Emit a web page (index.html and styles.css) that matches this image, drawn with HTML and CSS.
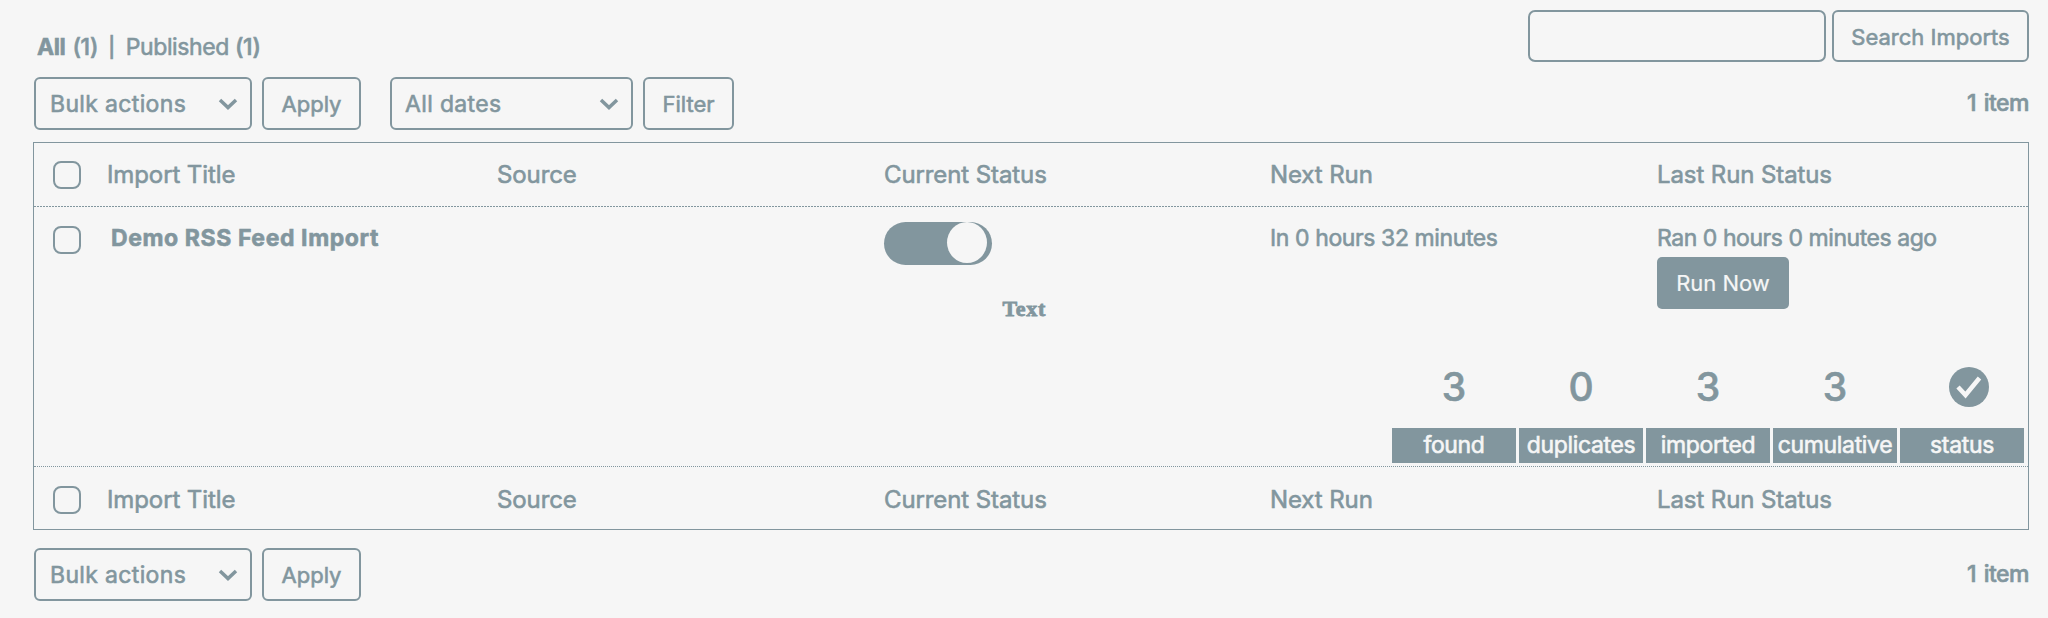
FILE: index.html
```html
<!DOCTYPE html>
<html lang="en">
<head>
<meta charset="utf-8">
<title>Imports</title>
<link rel="stylesheet" href="styles.css">
</head>
<body>
<header class="top">
  <nav class="views"><a class="views-all"><b>All</b><span class="count">(1)</span></a><span class="views-bar">|</span><a class="views-pub">Published <span class="count">(1)</span></a></nav>
  <form class="search"><input class="search-input" type="text" aria-label="Search"><button class="btn btn-search" type="button">Search Imports</button></form>
</header>
<section class="tablenav">
  <div class="select select-bulk"><span>Bulk actions</span><svg class="chevron" viewBox="0 0 20 12"><path d="M2 2l8 7.500L18 2"/></svg></div>
  <button class="btn btn-apply" type="button">Apply</button>
  <div class="select select-dates"><span>All dates</span><svg class="chevron" viewBox="0 0 20 12"><path d="M2 2l8 7.500L18 2"/></svg></div>
  <button class="btn btn-filter" type="button">Filter</button>
  <span class="items">1 item</span>
</section>
<main class="table">
  <div class="row head">
    <i class="check"></i><span>Import Title</span><span>Source</span><span>Current Status</span><span>Next Run</span><span>Last Run Status</span>
  </div>
  <div class="entry">
    <div class="row body">
      <i class="check"></i>
      <b class="name">Demo RSS Feed Import</b>
      <span></span>
      <div class="status"><div class="toggle"><i class="knob"></i></div><span class="note">Text</span></div>
      <span class="next">In 0 hours 32 minutes</span>
      <div class="last"><span class="ran">Ran 0 hours 0 minutes ago</span><button class="run-now" type="button">Run Now</button></div>
    </div>
    <div class="stats">
      <div class="stat"><span class="num">3</span><span class="label">found</span></div>
      <div class="stat"><span class="num">0</span><span class="label">duplicates</span></div>
      <div class="stat"><span class="num">3</span><span class="label">imported</span></div>
      <div class="stat"><span class="num">3</span><span class="label">cumulative</span></div>
      <div class="stat"><span class="num num-icon"><svg class="ok" viewBox="0 0 40 40"><circle cx="20" cy="20" r="20"/><path d="M9 20l7.500 8L30.500 11"/></svg></span><span class="label">status</span></div>
    </div>
  </div>
  <div class="row foot">
    <i class="check"></i><span>Import Title</span><span>Source</span><span>Current Status</span><span>Next Run</span><span>Last Run Status</span>
  </div>
</main>
<section class="tablenav tablenav-bottom">
  <div class="select select-bulk"><span>Bulk actions</span><svg class="chevron" viewBox="0 0 20 12"><path d="M2 2l8 7.500L18 2"/></svg></div>
  <button class="btn btn-apply" type="button">Apply</button>
  <span class="items">1 item</span>
</section>
</body>
</html>
```
FILE: styles.css
```css
* { box-sizing: border-box; }
body { margin: 0; height: 618px; overflow: hidden; padding: 10px 19px 0 33px; background: #f6f6f6; color: #82969e; font: 400 23px/28px Inter, "Liberation Sans", sans-serif; white-space: nowrap; -webkit-text-stroke: 0.6px; }
button, input { font: inherit; color: inherit; background: none; margin: 0; padding: 0; }
.top { display: flex; justify-content: space-between; height: 67px; }
.views { display: flex; padding: 23px 0 0 4px; letter-spacing: -0.4px; }
.views-all { display: flex; gap: 7px; }
.count { font-weight: 500; letter-spacing: -0.3px; }
.views-bar { margin: 0 11px 0 10px; font-size: 20px; font-weight: 500; }
.search { display: flex; gap: 6px; height: 52px; }
.search-input { width: 298px; border: 2px solid; border-radius: 7px; }
.btn { border: 2px solid; border-radius: 6px; height: 53px; font-size: 22px; text-align: center; }
.btn-search { width: 197px; height: 52px; padding-top: 1px; }
.tablenav { display: flex; height: 65px; padding-left: 1px; }
.tablenav-bottom { height: auto; padding-top: 18px; }
.select { display: flex; align-items: center; justify-content: space-between; height: 53px; border: 2px solid; border-radius: 6px; padding: 0 12px 0 14px; letter-spacing: 0.35px; }
.select-bulk { width: 218px; margin-right: 10px; }
.select-dates { width: 243px; margin: 0 10px 0 29px; padding-left: 13px; }
.btn-apply { width: 99px; }
.btn-filter { width: 91px; }
.chevron { width: 20px; height: 12px; fill: none; stroke: currentColor; stroke-width: 3.5; }
.items { margin-left: auto; padding-top: 12px; font-weight: 500; letter-spacing: -0.5px; word-spacing: 2px; }
.table { border: 1px solid; height: 388px; }
.row { display: grid; grid-template-columns: 73px 390px 387px 386px 387px 1fr; }
.head { height: 64px; padding-top: 18px; font-size: 24px; letter-spacing: -0.1px; background: repeating-linear-gradient(90deg, #82969e 0 2px, transparent 2px 3px) left bottom / 100% 1px no-repeat; }
.check { display: block; width: 28px; height: 28px; margin-left: 19px; border: 2px solid; border-radius: 8px; }
.entry { height: 260px; border-bottom: 1px dotted; display: flex; flex-direction: column; justify-content: space-between; }
.body { padding-top: 17px; }
.body .check { margin-top: 2px; }
.name { padding-left: 4px; font-weight: 700; letter-spacing: 0.6px; }
.next { letter-spacing: -0.4px; }
.status { display: flex; flex-direction: column; width: 162px; padding-top: 15px; margin-top: -17px; }
.toggle { width: 108px; height: 43px; border-radius: 22px; background: #82969e; display: flex; justify-content: flex-end; padding: 0 5px 0 0; }
.knob { width: 40px; height: 41px; border-radius: 50%; background: #f6f6f6; }
.note { align-self: flex-end; margin-top: 30px; font: 700 22px/28px "Liberation Serif", serif; letter-spacing: 0.7px; -webkit-text-stroke: 0.8px; }
.last { display: flex; flex-direction: column; align-items: flex-start; }
.ran { letter-spacing: -0.45px; }
.run-now { width: 132px; height: 52px; margin-top: 5px; border: 0; border-radius: 5px; background: #82969e; color: #f6f6f6; font-size: 22px; -webkit-text-stroke: 0.2px; }
.stats { display: grid; grid-template-columns: repeat(5, 124px); gap: 3px; justify-content: end; padding: 0 4px 3px 0; }
.stat { display: flex; flex-direction: column; text-align: center; }
.num { font-size: 39px; line-height: 40px; height: 61px; font-weight: 500; }
.num-icon { padding-left: 13px; }
.ok { width: 40px; height: 40px; display: block; margin: 0 auto; fill: #82969e; }
.ok path { fill: none; stroke: #f6f6f6; stroke-width: 4.5; }
.label { height: 35px; line-height: 34px; background: #82969e; color: #f6f6f6; letter-spacing: -0.35px; }
.foot { height: 62px; padding-top: 19px; font-size: 24px; letter-spacing: -0.1px; }
```
